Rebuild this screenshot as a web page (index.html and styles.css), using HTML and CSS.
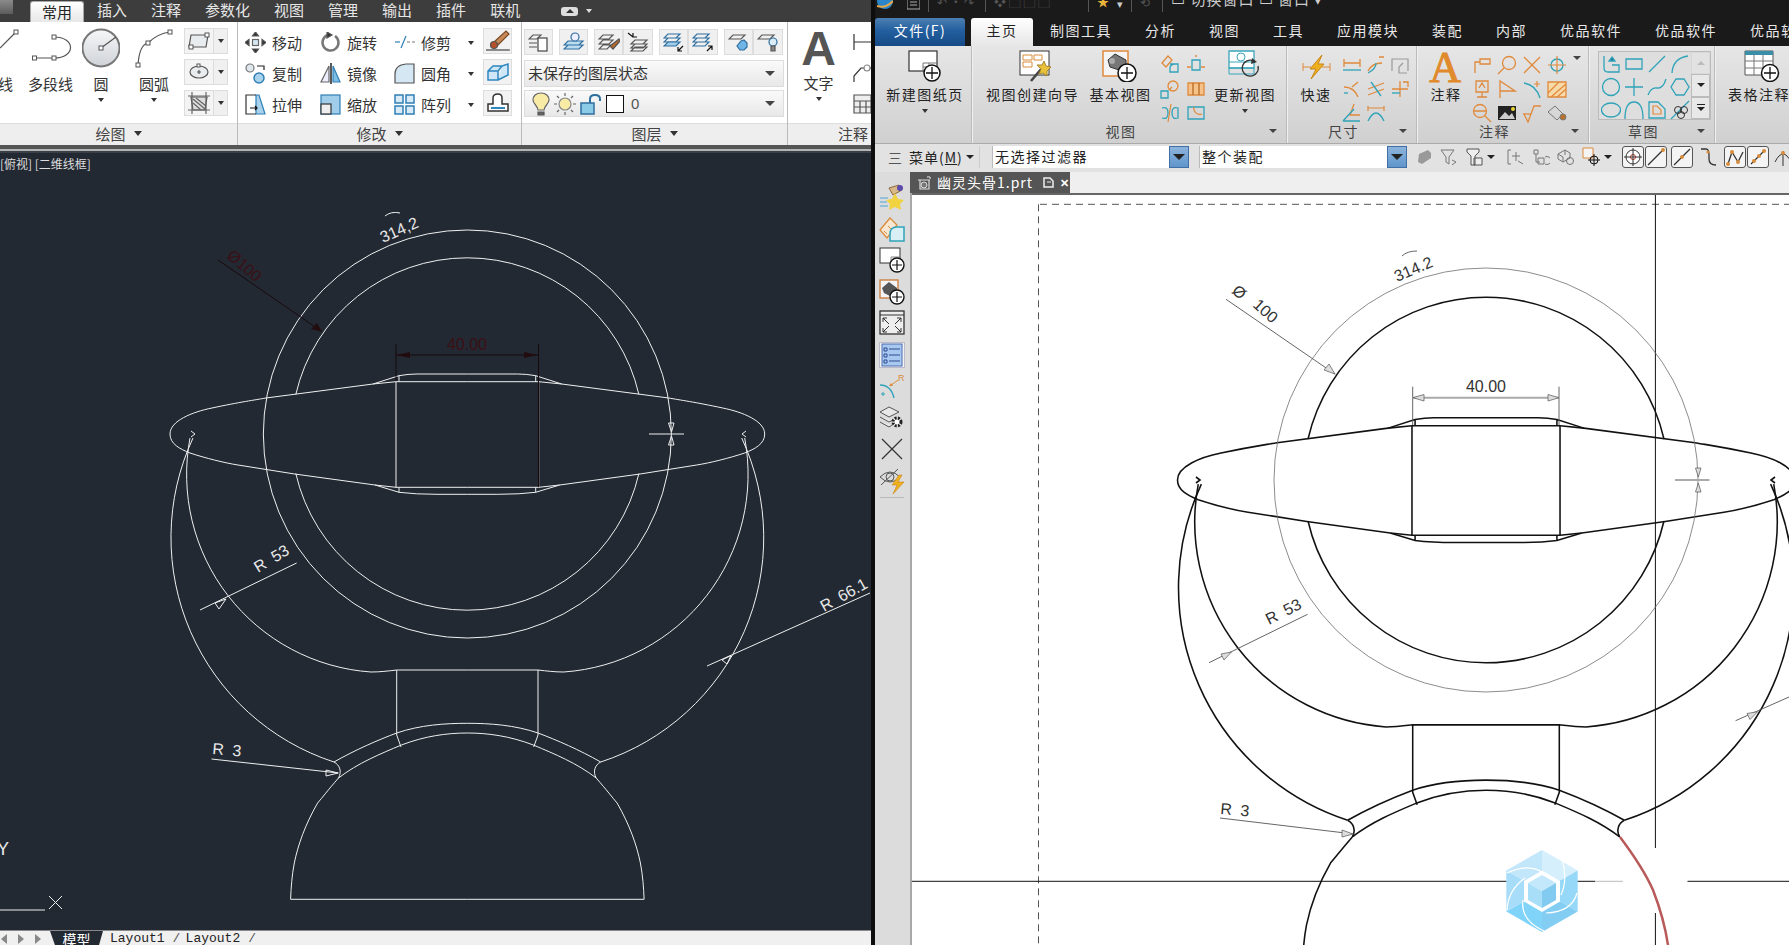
FILE: index.html
```html
<!DOCTYPE html>
<html lang="zh-CN">
<head>
<meta charset="utf-8">
<title>CAD</title>
<link rel="stylesheet" href="styles.css">
</head>
<body>
<div class="screen">

<section class="acad">
  <nav class="acad-tabs">
    <span class="app-btn"></span>
    <span class="atab atab-on">常用</span><span class="atab">插入</span><span class="atab">注释</span><span class="atab">参数化</span><span class="atab">视图</span><span class="atab">管理</span><span class="atab">输出</span><span class="atab">插件</span><span class="atab">联机</span>
    <span class="min-pill"><i class="tri-up"></i></span><i class="tri tri-w"></i>
  </nav>

  <div class="acad-ribbon">
    <div class="apanel ap-draw">
      <div class="apanel-body">
        <div class="atool tool-line">
          <svg width="22" height="42" viewBox="0 28 22 42" class="g"><path d="M0 48 L15 33"/><rect class="n" x="14" y="30" width="4" height="4"/></svg>
          <span>线</span>
        </div>
        <div class="atool tool-pl">
          <svg width="45" height="42" viewBox="28 28 45 42" class="g"><path d="M35 58H54M54 37C76 37 76 58 54 58"/><rect class="n" x="32.5" y="56" width="4" height="4"/><rect class="n" x="52" y="56" width="4" height="4"/><rect class="n" x="52" y="35" width="4" height="4"/></svg>
          <span>多段线</span>
        </div>
        <div class="atool tool-c">
          <svg width="38" height="42" viewBox="82 28 38 42" class="g"><defs><linearGradient id="cg" x1="0" y1="0" x2="0" y2="1"><stop offset="0" stop-color="#f6f7f8"/><stop offset="1" stop-color="#cfd3d8"/></linearGradient></defs><circle cx="101" cy="48" r="18.5" fill="url(#cg)" stroke="#777" stroke-width="2"/><path d="M101 48L116 37"/><rect class="n" x="99" y="46" width="4" height="4"/></svg>
          <span>圆</span><i class="tri tri-s"></i>
        </div>
        <div class="atool tool-arc">
          <svg width="38" height="42" viewBox="135 28 38 42" class="g"><path d="M138 65C139 50 143 44 148 43C155 36 162 33 170 32"/><rect class="n" x="136" y="63" width="4" height="4"/><rect class="n" x="146" y="41" width="4" height="4"/><rect class="n" x="168" y="30" width="4" height="4"/></svg>
          <span>圆弧</span><i class="tri tri-s"></i>
        </div>
        <div class="asplit-col">
          <div class="asplit"><b><svg width="22" height="18" viewBox="0 0 22 18" class="g"><path d="M3 3H20L18 15H1Z" fill="#e9ecef"/><rect class="n" x="1" y="13" width="4" height="4"/><rect class="n" x="17" y="1" width="4" height="4"/></svg></b><em><i class="tri tri-s"></i></em></div>
          <div class="asplit"><b><svg width="22" height="18" viewBox="0 0 22 18" class="g"><ellipse cx="11" cy="9" rx="9" ry="6" fill="#e9ecef"/><path d="M11 7V11M9 9H13"/><rect class="n" x="9" y="1" width="3" height="3"/></svg></b><em><i class="tri tri-s"></i></em></div>
          <div class="asplit"><b><svg width="22" height="22" viewBox="0 0 22 22" class="g"><path d="M3 5H19L17 18H5Z" fill="#ddd"/><path d="M5 7L17 17M8 6L18 14M5 11L13 18M0 4H22M0 18H22M4 0V22M18 0V22" stroke="#666"/></svg></b><em><i class="tri tri-s"></i></em></div>
        </div>
      </div>
      <div class="apanel-title">绘图<i class="tri tri-t"></i></div>
    </div>

    <div class="apanel ap-mod">
      <div class="apanel-body">
        <div class="mod-grid">
          <div class="mod"><svg width="21" height="21" viewBox="0 0 21 21" class="g"><path d="M10.5 0L7.5 4H13.5ZM10.5 21L7.5 17H13.5ZM0 10.5L4 7.5V13.5ZM21 10.5L17 7.5V13.5Z" fill="#333"/><rect x="7.5" y="7.5" width="6" height="6" fill="#d8e9f4" stroke="#666"/></svg><span>移动</span></div>
          <div class="mod"><svg width="21" height="21" viewBox="0 0 21 21" class="g"><path d="M8 3A8 8 0 1 0 15 4" fill="none" stroke="#777" stroke-width="2.5"/><path d="M7 0L12 3L7 6Z" fill="#333"/></svg><span>旋转</span></div>
          <div class="mod"><svg width="21" height="21" viewBox="0 0 21 21" class="g"><path d="M1 10H6" stroke="#2f7fb5"/><path d="M7 16L12 4" stroke="#2f7fb5"/><path d="M13 10H21" stroke="#777" stroke-dasharray="3 2"/></svg><span>修剪</span><i class="tri tri-s mod-tri"></i></div>
          <div class="mod"><svg width="21" height="21" viewBox="0 0 21 21" class="g"><circle cx="5" cy="5" r="4" fill="#dfe7ee" stroke="#777"/><circle cx="14" cy="15" r="5" fill="#a9d3ec" stroke="#2f7fb5" stroke-width="1.5"/><path d="M12 3H19V7" stroke="#222"/></svg><span>复制</span></div>
          <div class="mod"><svg width="21" height="21" viewBox="0 0 21 21" class="g"><path d="M9 3L1 19H9Z" fill="#eef" stroke="#666"/><path d="M13 3L20 19H13Z" fill="#7fbfe6" stroke="#2f7fb5"/><path d="M11 0V21" stroke="#222" stroke-width="1.5"/></svg><span>镜像</span></div>
          <div class="mod"><svg width="21" height="21" viewBox="0 0 21 21" class="g"><path d="M1 20V11Q1 2 12 1H20V20Z" fill="#d5e7f3" stroke="#555"/></svg><span>圆角</span><i class="tri tri-s mod-tri"></i></div>
          <div class="mod"><svg width="21" height="21" viewBox="0 0 21 21" class="g"><path d="M11 1H14L20 20H11Z" fill="#a9d3ec" stroke="#2f7fb5"/><path d="M11 1H1V20H11" stroke="#333"/><path d="M5 14H12M10 12L12 14L10 16" stroke="#111"/></svg><span>拉伸</span></div>
          <div class="mod"><svg width="21" height="21" viewBox="0 0 21 21" class="g"><rect x="1" y="1" width="19" height="19" fill="#9fcdea" stroke="#2f7fb5"/><rect x="1" y="10" width="10" height="10" fill="#eee" stroke="#333"/></svg><span>缩放</span></div>
          <div class="mod"><svg width="21" height="21" viewBox="0 0 21 21" class="g"><path d="M1 1H9V9H1ZM12 1H20V9H12ZM1 12H9V20H1ZM12 12H20V20H12Z" fill="#d9ebf6" stroke="#2f7fb5" stroke-width="1.5"/></svg><span>阵列</span><i class="tri tri-s mod-tri"></i></div>
        </div>
        <div class="abtn-col">
          <div class="abtn"><svg width="24" height="22" viewBox="0 0 24 22" class="g"><path d="M8 12L20 1L23 4L12 15Z" fill="#c98a5a" stroke="#7a4a22"/><circle cx="8" cy="15" r="3.5" fill="#b5502a"/><path d="M0 20H24" stroke="#444"/></svg></div>
          <div class="abtn"><svg width="24" height="22" viewBox="0 0 24 22" class="g"><path d="M2 10L7 5H16L12 10V19H2ZM12 10H2M16 5L22 3V14L12 19" fill="#cfe7f6" stroke="#2f87c0" stroke-width="1.5"/></svg></div>
          <div class="abtn"><svg width="24" height="22" viewBox="0 0 24 22" class="g"><path d="M2 19V12H7V6Q7 2 12 2Q16 2 16 6V12H22V19Z" fill="#fff" stroke="#333" stroke-width="1.5"/><path d="M5 16H19" stroke="#2f87c0" stroke-width="2"/></svg></div>
        </div>
      </div>
      <div class="apanel-title">修改<i class="tri tri-t"></i></div>
    </div>

    <div class="apanel ap-layer">
      <div class="apanel-body layer-body">
        <div class="layer-top">
          <div class="lgroup"><span><svg width="22" height="20" viewBox="0 0 22 20" class="g"><path d="M5 3H13L9 7H1ZM1 11H9M1 15H9" stroke="#555"/><rect x="10" y="6" width="9" height="13" fill="#fff" stroke="#444"/></svg></span></div>
          <div class="lgroup"><span><svg width="22" height="20" viewBox="0 0 22 20" class="g"><path d="M5 9H20L16 13H1ZM5 13H20L16 17H1Z" fill="#bcdcf0" stroke="#2f6f9f"/><circle cx="12" cy="5" r="4" fill="#eef" stroke="#2f6f9f"/></svg></span></div>
          <div class="lgroup"><span><svg width="22" height="20" viewBox="0 0 22 20" class="g"><path d="M5 3H15L11 7H1ZM5 8H15L11 12H1ZM5 13H13L9 17H1Z"/><path d="M12 14L21 7L22 9L15 17Z" fill="#b86a2c"/></svg></span><span><svg width="22" height="20" viewBox="0 0 22 20" class="g"><path d="M8 8H20L16 12H4ZM8 12H20L16 16H4ZM8 15H20L16 19H4Z"/><path d="M6 1V5H10M1 1L6 5" stroke="#111"/></svg></span></div>
          <div class="lgroup"><span><svg width="22" height="20" viewBox="0 0 22 20" class="g"><path d="M5 2H17L13 6H1ZM5 6H17L13 10H1Z" stroke="#2f6f9f"/><path d="M5 10H17L13 14H1Z" fill="#9fcdea" stroke="#2f6f9f"/><path d="M20 14L15 19M15 15V19H19" stroke="#111"/></svg></span><span><svg width="22" height="20" viewBox="0 0 22 20" class="g"><path d="M5 2H17L13 6H1ZM5 6H17L13 10H1ZM5 10H17L13 14H1Z" stroke="#2f6f9f"/><path d="M15 19L20 14M16 14H20V18" stroke="#111"/></svg></span></div>
          <div class="lgroup"><span><svg width="22" height="20" viewBox="0 0 22 20" class="g"><path d="M5 3H17L13 7H1Z"/><path d="M13 9L16 8L19 11L19 15L16 18L12 18L9 14Z" fill="#6fb6e6" stroke="#2f6f9f"/></svg></span><span><svg width="22" height="20" viewBox="0 0 22 20" class="g"><path d="M5 3H17L13 7H1Z"/><circle cx="16" cy="10" r="4" fill="#d9ecf7" stroke="#2f6f9f"/><path d="M14 14H18V19H14Z" fill="#888"/></svg></span></div>
        </div>
        <div class="lcombo"><span class="lcombo-t">未保存的图层状态</span><i class="tri tri-b"></i></div>
        <div class="lcombo lcombo-2">
          <svg width="18" height="24" viewBox="0 0 18 24" class="g"><path d="M9 1C4 1 1 4 1 8C1 12 6 14 6 18H12C12 14 17 12 17 8C17 4 14 1 9 1Z" fill="#f7eba6" stroke="#666"/><path d="M6 20H12V23H6Z" fill="#666"/></svg>
          <svg width="22" height="22" viewBox="0 0 22 22" class="g"><circle cx="11" cy="11" r="6" fill="#f7eba6" stroke="#888"/><path d="M11 0V3M11 19V22M0 11H3M19 11H22M3 3L5 5M17 17L19 19M3 19L5 17M17 5L19 3" stroke="#666"/></svg>
          <svg width="22" height="22" viewBox="0 0 22 22" class="g"><rect x="1" y="10" width="13" height="11" fill="#8ccbe8" stroke="#2f6f9f" stroke-width="1.5"/><path d="M10 10V6Q10 2 15 2Q20 2 20 6V8" fill="none" stroke="#2f6f9f" stroke-width="2"/></svg>
          <span class="lswatch"></span><span class="lname">0</span><i class="tri tri-b"></i>
        </div>
      </div>
      <div class="apanel-title">图层<i class="tri tri-t"></i></div>
    </div>

    <div class="apanel ap-note">
      <div class="apanel-body note-body">
        <div class="atool tool-text"><strong class="bigA">A</strong><span>文字</span><i class="tri tri-s"></i></div>
        <div class="note-side">
          <svg width="18" height="20" viewBox="0 0 18 20" class="g"><path d="M1 2V18M1 10H18" stroke="#333"/></svg>
          <svg width="18" height="22" viewBox="0 0 18 22" class="g"><path d="M1 20V14L8 6H18" stroke="#333"/><circle cx="14" cy="6" r="3" fill="#fff" stroke="#888"/></svg>
          <svg width="18" height="20" viewBox="0 0 18 20" class="g"><path d="M1 1H18V19H1ZM1 7H18M1 13H18M7 7V19M13 7V19" fill="#eee" stroke="#555"/></svg>
        </div>
      </div>
      <div class="apanel-title note-title">注释</div>
    </div>
  </div>

  <div class="acad-sep"></div>

  <div class="acad-view">
    <div class="view-label">[俯视] [二维线框]</div>
    <svg class="cad cad-dark" width="871" height="777" viewBox="0 153 871 777">
      <defs>
        <g id="half">
          <path d="M170 434C170 421 192 412 212 408C240 402 255 400 266 398L373 384L396 381.7"/>
          <path d="M170 434C170 444 180 449 190 453C205 458 225 463 238 465L294.6 474L375 485L396 487.3"/>
          <path d="M373 384L399 375.7Q408 374 417 374H467.35M399 375.7V381.7"/>
          <path d="M375 485L399 492.3Q415 494.3 437 494.3H467.35M399 487.3V492.3"/>
          <path d="M396 381.7H467.35M396 487.3H467.35"/>
          <path d="M193 438A236 236 0 0 0 334 762"/>
          <path d="M190 438A198 198 0 0 0 371 672C380 672 388 671 396.7 670H467.35"/>
          <path d="M396.7 670V735L401 747"/>
          <path d="M334 762C355 750 378 740 396.7 733C420 725 445 723.3 467.35 723.3"/>
          <path d="M338.5 778C358 763 380 754 401.4 745C425 736 447 733 467.35 733"/>
          <path d="M334 762C340 765 342 772 338.5 778"/>
        </g>
        <path id="dome" d="M338.5 778C328 790 322 798 317.6 803C305 825 298 845 294.3 863C292 875 291 888 290.6 899.3H467.35"/>
        <g id="head">
          <use href="#half"/>
          <use href="#half" transform="translate(934.7 0) scale(-1 1)"/>
          <path d="M396 381.7V487.3M538.7 381.7V487.3"/>
          <path d="M295.8 394.5A176 176 0 0 1 638.9 394.5M295.8 473.5A176 176 0 0 0 638.9 473.5"/>
        </g>
      </defs>
      <use href="#head"/>
      <use href="#dome"/>
      <use href="#dome" transform="translate(934.7 0) scale(-1 1)"/>
      <circle cx="467.35" cy="434" r="204"/>
      <path class="ink" d="M538.5 344V487M396 344V381M396 355H537.7M218 260L322 331.7"/>
      <path class="ink-fill" d="M396 355L410 352V358ZM537.7 355L524 352V358ZM322 331.7L311 329L317 323Z"/>
      <text class="dim ink-t" x="467" y="350" text-anchor="middle">40.00</text>
      <text class="dim ink-t" transform="translate(226 257) rotate(41)">Ø100</text>
      <text class="dim" transform="translate(383 243) rotate(-24)">314,2</text>
      <path d="M385 216Q391 211 400 213"/>
      <path d="M191 431L195 434L191 437M746 431L742 434L746 437"/>
      <path d="M200 610L296.6 563M707 666L870 593M211.5 759L338.5 773"/>
      <path d="M215 603L226 599L219 609ZM722 660L731 655.5L727 664ZM326 770L338 773L326 776Z"/>
      <text class="dim" transform="translate(258 573) rotate(-31)">R 53</text>
      <text class="dim" transform="translate(824 612) rotate(-29)">R 66.1</text>
      <text class="dim" transform="translate(212 754) rotate(5)">R 3</text>
      <path d="M649 434H684M668.5 423H674L671.5 432ZM668.5 445H674L671.5 436Z"/>
      <text class="dim ucs" x="-3" y="855">Y</text>
      <path d="M0 910H45M49 896L62 909M62 896L49 909"/>
    </svg>
  </div>

  <div class="acad-bottom">
    <span class="nav"><i class="nav-l"></i><i class="nav-r"></i><i class="nav-e"></i></span>
    <span class="model">模型</span>
    <span class="layout">Layout1</span><span class="slash">/</span><span class="layout">Layout2</span><span class="slash">/</span>
  </div>
</section>

<div class="gutter"></div>

<section class="nx">
  <div class="nx-quick">
    <svg width="16" height="10" viewBox="0 0 16 10"><ellipse cx="8" cy="1" rx="8" ry="8" fill="#2a86c8"/><path d="M0 6Q8 9 16 1" fill="none" stroke="#e8a84a" stroke-width="2"/></svg>
    <svg class="qdoc" width="13" height="10" viewBox="0 0 13 10"><path d="M0 -2H13V9H0ZM3 2H10M3 5H10" fill="none" stroke="#aaa"/></svg>
    <span class="qsep"></span><span class="qfaint q1">↶ · ↷</span><span class="qsep"></span><span class="qfaint q2">❖ ▢ ▢ ▢</span><span class="qsep"></span>
    <span class="qstar">★</span><span class="qarrow">▾</span><span class="qsep"></span><span class="qfaint q3">⟲</span><span class="qsep"></span>
    <span class="qtext">▭ 切换窗口 ▭ 窗口 ▾</span>
  </div>
  <nav class="nx-tabs">
    <span class="nfile">文件(F)</span><span class="ntab-on">主页</span>
    <span class="ntab nt-first">制图工具</span><span class="ntab">分析</span><span class="ntab">视图</span><span class="ntab">工具</span><span class="ntab">应用模块</span><span class="ntab">装配</span><span class="ntab">内部</span><span class="ntab">优品软件</span><span class="ntab">优品软件</span><span class="ntab">优品软件</span>
  </nav>

  <div class="nx-ribbon">
    <div class="npanel np-1">
      <div class="npanel-body">
        <div class="ntool nt-sheet">
          <svg width="36" height="32" viewBox="0 0 36 32"><use href="#sheet"/></svg>
          <span>新建图纸页</span><i class="tri tri-s"></i>
        </div>
      </div>
    </div>
    <div class="npanel np-2">
      <div class="npanel-body">
        <div class="ntool nt-wiz">
          <svg width="36" height="32" viewBox="0 0 36 32"><rect x="5" y="1" width="29" height="24" fill="#fff" stroke="#333"/><path d="M8 5H17V10H8ZM19 5H27V10H19ZM8 12H17V17H8Z" fill="#fff" stroke="#d98c3c"/><path d="M16 31L27 18" stroke="#444" stroke-width="2.5"/><path d="M29 11L31 16L36 17L32 21L32 26L28 23L24 24L26 19L22 15L27 15Z" fill="#e8c33a" stroke="#a8842a"/></svg>
          <span>视图创建向导</span>
        </div>
        <div class="ntool nt-base">
          <svg width="38" height="32" viewBox="0 0 38 32"><rect x="1" y="1" width="25" height="25" fill="#f4f4f4" stroke="#e08a3c" stroke-width="1.5"/><path d="M6 10L13 4L24 10V14L30 18V25L22 24L17 20L8 17Z" fill="#777" stroke="#333"/><circle cx="10" cy="11" r="3" fill="#aaa"/><circle cx="25" cy="23" r="9" fill="#fff" stroke="#111" stroke-width="1.5"/><path d="M25 17V29M19 23H31" stroke="#111" stroke-width="1.3"/></svg>
          <span>基本视图</span>
        </div>
        <div class="ngrid ngrid-view">
          <svg viewBox="0 0 20 20" class="o"><path d="M2 8L8 1L12 5L6 12Z"/><path class="t" d="M10 9H18V17H10V13Q10 10 14 9"/></svg>
          <svg viewBox="0 0 20 20" class="o"><path d="M1 12H5M15 12H19"/><path class="t" d="M6 5H14V15H6Z"/><path d="M9 1H11"/></svg>
          <svg viewBox="0 0 20 20" class="o"><path class="t" d="M1 12H8V19H1Z"/><circle cx="13" cy="7" r="5"/><path d="M9 11L12 8"/></svg>
          <svg viewBox="0 0 20 20" class="o"><path d="M2 4H18V16H2Z" fill="#f5c38a"/><path d="M7 4V16M13 4V16" stroke="#b56a22"/></svg>
          <svg viewBox="0 0 20 20" class="t"><path d="M2 5Q8 3 8 10Q8 17 2 15M18 5Q12 3 12 10Q12 17 18 15Z"/><path class="oo" d="M11 1L8 19"/></svg>
          <svg viewBox="0 0 20 20" class="t"><path d="M2 4H18V16H2Z"/><path class="oo" d="M8 4A6 6 0 0 0 16 11"/></svg>
        </div>
        <div class="ntool nt-upd">
          <svg width="34" height="32" viewBox="0 0 34 32"><path d="M1 1H26V18H1Z" fill="#fff" stroke="#3aa6bb" stroke-width="1.3"/><circle cx="13" cy="7" r="4" fill="#fff" stroke="#3aa6bb"/><path d="M1 12H26M1 24H26V18H1Z" fill="none" stroke="#3aa6bb"/><path d="M30 16A8 8 0 1 1 26 11" fill="none" stroke="#333" stroke-width="1.3"/><path d="M24 8L29 12L23 14Z" fill="#333"/></svg>
          <span>更新视图</span><i class="tri tri-s"></i>
        </div>
      </div>
      <div class="npanel-title"><span>视图</span><i class="tri tri-c"></i></div>
    </div>
    <div class="npanel np-3">
      <div class="npanel-body">
        <div class="ntool nt-quick">
          <svg width="29" height="32" viewBox="0 0 29 32"><path d="M1 17H9M20 17H28M1 13V21M28 13V21" fill="none" stroke="#e08a3c"/><path d="M20 5L8 19H14L9 29L22 14H16Z" fill="#efb020" stroke="#c98515"/></svg>
          <span>快速</span>
        </div>
        <div class="ngrid ngrid-dim">
          <svg viewBox="0 0 20 20" class="o"><path d="M2 4V12M18 4V12M2 8H18"/><path class="t" d="M1 15H19"/></svg>
          <svg viewBox="0 0 20 20" class="o"><path d="M2 16Q6 8 16 8M13 2L18 2"/><path class="t" d="M2 18Q10 14 10 8"/></svg>
          <svg viewBox="0 0 20 20" class="g2"><path d="M2 16V4H18V16M13 8L9 12V18H17"/></svg>
          <svg viewBox="0 0 20 20" class="o"><path d="M2 8Q12 8 16 18M16 3L10 8"/><path class="t" d="M2 14H6"/></svg>
          <svg viewBox="0 0 20 20" class="o"><path d="M2 10L18 4M2 16L18 10"/><path class="t" d="M5 3L15 17"/></svg>
          <svg viewBox="0 0 20 20" class="o"><path d="M2 10H18M10 2V18M13 3H18V8"/><path class="t" d="M2 14H10"/></svg>
          <svg viewBox="0 0 20 20" class="o"><path d="M12 1L8 12H18"/><path class="t" d="M1 18L12 6M1 18H18"/></svg>
          <svg viewBox="0 0 20 20" class="t"><path d="M2 18Q10 2 18 18"/><path class="oo" d="M2 5H18M2 3V8M18 3V8"/></svg>
        </div>
      </div>
      <div class="npanel-title"><span>尺寸</span><i class="tri tri-c"></i></div>
    </div>
    <div class="npanel np-4">
      <div class="npanel-body">
        <div class="ntool nt-A">
          <strong class="nbigA">A</strong>
          <span>注释</span>
        </div>
        <div class="ngrid ngrid-note">
          <svg viewBox="0 0 20 20" class="o"><path d="M8 4H18V9H8ZM8 7H3V18"/></svg>
          <svg viewBox="0 0 20 20" class="o"><circle cx="12" cy="8" r="6.5"/><path d="M7 13L1 19"/></svg>
          <svg viewBox="0 0 20 20" class="o"><path d="M2 2L18 18M18 2L2 18"/></svg>
          <svg viewBox="0 0 20 20" class="t"><circle cx="10" cy="10" r="6"/><path class="oo" d="M10 1V19M1 10H19"/></svg>
          <svg viewBox="0 0 20 20" class="o"><path d="M4 2H16V13H4ZM10 13V18M5 18H15M7 9L10 4L13 9"/></svg>
          <svg viewBox="0 0 20 20" class="o"><path d="M3 19V2L18 12H3"/></svg>
          <svg viewBox="0 0 20 20" class="t"><path d="M2 4Q14 6 18 19"/><path class="oo" d="M12 5H18M15 2V8"/></svg>
          <svg viewBox="0 0 20 20" class="o"><path d="M1 3H19V18H1Z" fill="#f8d9a8"/><path d="M4 18L19 5M1 14L12 3M10 18L19 10"/></svg>
          <svg viewBox="0 0 20 20" class="o"><circle cx="8" cy="8" r="6.5"/><path d="M1.5 8H14.5M13 13L19 19"/></svg>
          <svg viewBox="0 0 20 20"><rect x="1" y="3" width="18" height="14" fill="#222"/><path d="M2 16L8 9L12 13L15 10L18 16Z" fill="#ccc"/><circle cx="16" cy="6" r="2" fill="#e8d23a"/></svg>
          <svg viewBox="0 0 20 20" class="o"><path d="M2 11L6 19L12 3H19"/><path d="M1 11H9"/></svg>
          <svg viewBox="0 0 20 20" class="g3"><path d="M1 9L8 3L16 11L10 17Z"/><circle cx="16" cy="14" r="3" fill="#b9722c"/></svg>
        </div>
        <i class="tri tri-c note-tri"></i>
      </div>
      <div class="npanel-title"><span>注释</span><i class="tri tri-c"></i></div>
    </div>
    <div class="npanel np-5">
      <div class="npanel-body">
        <div class="sketch">
          <div class="ngrid ngrid-sketch">
            <svg viewBox="0 0 20 20" class="t"><path d="M3 2V14Q3 18 7 18H18V11H11"/><path d="M11 3L14 7H8Z" fill="#1d6f85"/></svg>
            <svg viewBox="0 0 20 20" class="t"><path d="M2 5H18V15H2Z"/></svg>
            <svg viewBox="0 0 20 20" class="t"><path d="M2 18L18 2"/></svg>
            <svg viewBox="0 0 20 20" class="t"><path d="M2 19Q3 4 18 2"/></svg>
            <svg viewBox="0 0 20 20" class="t"><circle cx="10" cy="10" r="8.5"/></svg>
            <svg viewBox="0 0 20 20" class="t"><path d="M10 1V19M1 10H19"/></svg>
            <svg viewBox="0 0 20 20" class="t"><path d="M1 18Q4 10 10 11Q16 12 19 2"/></svg>
            <svg viewBox="0 0 20 20" class="t"><path d="M6 2H14L19 10L14 18H6L1 10Z"/></svg>
            <svg viewBox="0 0 20 20" class="t"><ellipse cx="10" cy="10" rx="9.5" ry="7"/></svg>
            <svg viewBox="0 0 20 20" class="t"><path d="M1 19Q1 2 10 2Q19 2 19 19"/></svg>
            <svg viewBox="0 0 20 20" class="oo-t"><path class="t" d="M2 2H11L18 9V18H2Z"/><path class="oo" d="M6 6H10L14 10V14H6Z"/></svg>
            <svg viewBox="0 0 20 20" class="t"><path d="M1 19L19 1"/><circle cx="8" cy="10" r="3.5" class="kk"/><circle cx="14" cy="10" r="3.5" class="kk"/><circle cx="11" cy="15" r="3.5" class="kk"/></svg>
          </div>
          <div class="sketch-scroll">
            <span class="ss ss-up"><i class="tri-up-g"></i></span>
            <span class="ss"><i class="tri tri-k"></i></span>
            <span class="ss"><b class="ss-bar"></b><i class="tri tri-k"></i></span>
          </div>
        </div>
      </div>
      <div class="npanel-title"><span>草图</span><i class="tri tri-c"></i></div>
    </div>
    <div class="npanel np-6">
      <div class="npanel-body">
        <div class="ntool nt-table">
          <svg width="36" height="32" viewBox="0 0 36 32"><path d="M1 1H29V25H1Z" fill="#fff" stroke="#555"/><path d="M1 1H29V5H1Z" fill="#3a8fa6"/><path d="M1 11H29M1 18H29M10 5V25M19 5V25" stroke="#777"/><circle cx="26" cy="23" r="8.5" fill="#fff" stroke="#111" stroke-width="1.5"/><path d="M26 17V29M20 23H32" stroke="#111" stroke-width="1.3"/></svg>
          <span>表格注释</span>
        </div>
      </div>
    </div>
  </div>

  <div class="nx-bar">
    <div class="tb-menu"><span class="tb-ham">三</span><span class="tb-m">菜单(<u>M</u>)</span><i class="tri tri-k"></i></div>
    <div class="tb-input">无选择过滤器</div><span class="tb-drop"><i class="tri tri-d"></i></span>
    <div class="tb-input tb-input-2">整个装配</div><span class="tb-drop"><i class="tri tri-d"></i></span>
    <span class="tb-icons">
      <span class="tb-i"><svg width="16" height="18" viewBox="0 0 16 18"><path d="M3 6L12 2L15 5V10L6 16L2 14Z" fill="#999"/></svg></span>
      <span class="tb-i"><svg width="18" height="18" viewBox="0 0 18 18" class="g3"><path d="M1 2H14L9 9V16L6 14V9ZM12 12L16 14L12 17"/></svg></span>
      <span class="tb-i"><svg width="18" height="18" viewBox="0 0 18 18" class="g4"><path d="M2 1H14V4L10 8V17H6V8L2 4ZM9 10H17V17H9Z"/></svg></span><i class="tri tri-k tb-a"></i>
      <span class="tb-i"><svg width="18" height="18" viewBox="0 0 18 18" class="g3"><path d="M4 2H1V16H4M9 4V13M5 8H13M11 13L16 16"/></svg></span>
      <span class="tb-i"><svg width="18" height="18" viewBox="0 0 18 18" class="g3"><path d="M2 2H6V6H2ZM4 6V14H8M6 10H12V16H6ZM13 9A4 4 0 1 1 13 16"/></svg></span>
      <span class="tb-i"><svg width="18" height="18" viewBox="0 0 18 18" class="g3"><path d="M1 6L8 2L13 5V10L6 14L1 11ZM8 2V7M1 6L6 9V14"/><circle cx="13" cy="13" r="3.5"/></svg></span>
      <span class="tb-i"><svg width="18" height="20" viewBox="0 0 18 20"><path d="M1 1H11V11H1Z" fill="#f4f4f4" stroke="#e08a3c"/><circle cx="12" cy="13" r="4" fill="none" stroke="#111"/><path d="M12 7V19M6 13H18" stroke="#111"/></svg></span><i class="tri tri-k tb-a tb-a2"></i>
      <span class="tb-box"><svg width="18" height="18" viewBox="0 0 18 18"><circle cx="9" cy="9" r="7" fill="#fff" stroke="#333"/><circle cx="9" cy="9" r="2.5" fill="none" stroke="#c0392b"/><path d="M9 0V18M0 9H18" stroke="#333"/></svg></span>
      <span class="tb-box"><svg width="18" height="18" viewBox="0 0 18 18"><path d="M1 17L17 1" stroke="#333" stroke-width="1.3"/><circle cx="16" cy="2" r="2" fill="#d98c3c"/></svg></span>
      <span class="tb-box tb-box-3"><svg width="18" height="18" viewBox="0 0 18 18"><path d="M1 17L17 1" stroke="#333" stroke-width="1.3"/><circle cx="9" cy="9" r="2" fill="#d98c3c"/></svg></span>
      <span class="tb-i tb-curve"><svg width="18" height="20" viewBox="0 0 18 20"><path d="M1 2H6Q9 2 9 8V12Q9 18 16 18" fill="none" stroke="#333" stroke-width="1.3"/><circle cx="8" cy="5" r="1.6" fill="#d98c3c"/></svg></span>
      <span class="tb-box"><svg width="18" height="18" viewBox="0 0 18 18"><path d="M2 16L6 4L12 14L17 4" fill="none" stroke="#333" stroke-width="1.3"/><circle cx="6" cy="4" r="2" fill="#d98c3c"/><circle cx="12" cy="14" r="2" fill="#d98c3c"/><circle cx="2" cy="16" r="2" fill="#d98c3c"/></svg></span>
      <span class="tb-box"><svg width="18" height="18" viewBox="0 0 18 18"><path d="M2 16L16 2" fill="none" stroke="#333" stroke-width="1.3"/><circle cx="5" cy="13" r="2" fill="#d98c3c"/><circle cx="10" cy="8" r="2" fill="#d98c3c"/><circle cx="15" cy="3" r="2" fill="#d98c3c"/></svg></span>
      <span class="tb-i"><svg width="18" height="18" viewBox="0 0 18 18"><path d="M1 14Q9 -2 17 14M9 3V18" fill="none" stroke="#333"/><circle cx="9" cy="5" r="2" fill="#d98c3c"/></svg></span>
    </span>
  </div>

  <div class="nx-main">
    <aside class="nx-side">
      <svg viewBox="0 0 26 26"><path d="M10 4L20 1L23 6L14 11Z" fill="#d9b98a" stroke="#8a6a3a"/><circle cx="21" cy="4" r="3" fill="#5a4ab0"/><path d="M16 9L19 15L25 16L21 20L22 26L16 23L10 26L11 20L7 16L13 15Z" fill="#f1d23f"/><path d="M1 14H9M1 18H8M1 22H9" stroke="#7db7dc" stroke-width="1.5"/></svg>
      <svg viewBox="0 0 26 26"><path d="M1 14L11 2L18 9L8 22Z" fill="#f7e7d2" stroke="#d98c3c" stroke-width="1.3"/><path d="M5 15L8 18M9 10L12 13" stroke="#d98c3c"/><path d="M11 25V18Q11 11 18 11H25V25Z" fill="#d8f0f5" stroke="#2fa3b8" stroke-width="1.5"/></svg>
      <svg viewBox="0 0 26 26"><rect x="1" y="1" width="20" height="15" fill="#fff" stroke="#333"/><path d="M12 10H21V16H12Z" fill="none" stroke="#888"/><circle cx="18" cy="18" r="7" fill="#fff" stroke="#111" stroke-width="1.4"/><path d="M18 13V23M13 18H23" stroke="#111" stroke-width="1.2"/></svg>
      <svg viewBox="0 0 26 26"><rect x="1" y="1" width="18" height="18" fill="#f4f4f4" stroke="#c97a35" stroke-width="1.3"/><path d="M3 9L10 3L18 9V14L13 18L5 14Z" fill="#555"/><circle cx="18" cy="18" r="7" fill="#fff" stroke="#111" stroke-width="1.4"/><path d="M18 13V23M13 18H23" stroke="#111" stroke-width="1.2"/></svg>
      <svg viewBox="0 0 26 26" class="g5"><rect x="1" y="1" width="24" height="23" fill="#eee" stroke="#333" stroke-width="1.3"/><path d="M1 5H25M4 8L10 14M4 8V12M4 8H8M22 8L16 14M22 8V12M22 8H18M4 22L10 16M4 22V18M4 22H8M22 22L16 16M22 22V18M22 22H18"/></svg>
      <svg viewBox="0 0 26 26"><rect x="0.5" y="0.5" width="25" height="25" fill="#f2f2f2" stroke="#bbc"/><rect x="3" y="2" width="20" height="22" fill="#a9c8f0" stroke="#4a6fb0"/><path d="M5 6H8V9H5ZM5 12H8V15H5ZM5 18H8V21H5Z" fill="none" stroke="#2a4a90"/><path d="M10 7H21M10 13H21M10 19H21" stroke="#2a4a90"/></svg>
      <svg viewBox="0 0 26 26"><path d="M1 12Q12 12 15 25" fill="none" stroke="#2fa3b8" stroke-width="1.3"/><path d="M11 13L19 7" stroke="#d98c3c"/><path d="M10 13L14 13L12 10Z" fill="#d98c3c"/><text class="side-r" x="19" y="8">R</text><path d="M2 21H6M4 19V23" stroke="#2fa3b8"/></svg>
      <svg viewBox="0 0 26 26"><path d="M1 7L10 2L20 7L10 12ZM1 12L10 17L14 15M1 17L10 22L13 20" fill="#e8e8e8" stroke="#555"/><circle cx="18" cy="17" r="4" fill="#fff" stroke="#222" stroke-width="3" stroke-dasharray="2 1.2"/></svg>
      <svg viewBox="0 0 26 26"><path d="M3 3L23 23M23 3L3 23" stroke="#333" stroke-width="1.2"/></svg>
      <svg viewBox="0 0 26 26"><path d="M1 9Q11 -1 21 9Q11 19 1 9Z" fill="none" stroke="#555"/><circle cx="11" cy="9" r="4" fill="none" stroke="#555"/><path d="M2 17L19 1" stroke="#555"/><path d="M20 7L13 17H18L14 26L25 14H19L23 7Z" fill="#efb020" stroke="#c98515" stroke-width=".6"/></svg>
      <span class="side-sep"></span>
    </aside>
    <div class="nx-doc">
      <div class="doc-tabs"><span class="doc-tab"><svg width="14" height="14" viewBox="0 0 14 14"><path d="M0 4H12M2 4V13H11V4" fill="none" stroke="#ddd" stroke-width="1.2"/><circle cx="6" cy="9" r="3" fill="#777" stroke="#ddd"/><path d="M9 1H12V3" stroke="#fff"/></svg><span class="doc-name">幽灵头骨1.prt</span><svg width="11" height="11" viewBox="0 0 11 11"><path d="M1 1H7L10 4V10H1Z" fill="none" stroke="#eee" stroke-width="1.5"/><path d="M4 5H8" stroke="#eee"/></svg><b class="doc-x">✕</b></span></div>
      <svg class="cad cad-light" width="877" height="750" viewBox="912 195 877 750">
        <path class="dash" d="M1040 204.3H1789M1038.5 204.3V945"/>
        <path class="guide" d="M1655.4 195V848M1655.4 913V945M912 881.3H1595M1687.5 881.3H1789"/>
        <path class="guide guide-f" d="M1595 881.3H1623"/>
        <g transform="translate(1486 480) scale(1.0375) translate(-467.35 -434)" class="solid">
          <use href="#head"/>
          <use href="#dome"/>
        </g>
        <circle class="thin" cx="1486" cy="480" r="212"/>
        <path class="red" d="M1620 837C1632 853 1645 872 1653 890C1660 908 1665 925 1668 945"/>
        <path class="dimline" d="M1412.7 386.7V425M1559 386.7V425M1226 299.3L1335.3 374.3M1209 662.7L1307.6 614.3M1220 818L1353.7 834M1735.6 720.7L1789 697"/>
        <path class="dimgray" d="M1412.7 397.7H1559M1675 480H1709.5"/>
        <path class="arrow" d="M1413 397.7L1424 394.5V401ZM1559 397.7L1548 394.5V401ZM1335 374L1324 370L1329 364ZM1231.4 652L1221 654L1224 660ZM1353 834L1342 830V837ZM1757.7 711.7L1747 713.5L1750 719.5ZM1695.5 468H1701L1698.3 477ZM1695.5 492H1701L1698.3 483Z"/>
        <path class="chev" d="M1196 477L1200 480L1196 483M1775 477L1771 480L1775 483"/>
        <path class="dimline" d="M1402 256Q1407 251 1417 251"/>
        <text class="ndim" x="1486" y="392" text-anchor="middle">40.00</text>
        <text class="ndim" transform="translate(1397 282) rotate(-23)">314.2</text>
        <text class="ndim" transform="translate(1231 292) rotate(42)">Ø</text>
        <text class="ndim" transform="translate(1252 306) rotate(42)">100</text>
        <text class="ndim" transform="translate(1269 625) rotate(-27)">R 53</text>
        <text class="ndim" transform="translate(1220 814) rotate(5)">R 3</text>
        <g class="wm">
          <path class="w1" d="M1542 850L1577.7 870.5L1542 891Z"/>
          <path class="w2" d="M1577.7 870.5V911.5L1542 891Z"/>
          <path class="w3" d="M1577.7 911.5L1542 932L1542 891Z"/>
          <path class="w4" d="M1542 932L1506.3 911.5L1542 891Z"/>
          <path class="w5" d="M1506.3 911.5V870.5L1542 891Z"/>
          <path class="w6" d="M1506.3 870.5L1542 850V891Z"/>
          <path class="wl" d="M1507 873Q1535 860 1551 880M1562 859Q1568 880 1561 895M1577 893Q1572 912 1546 913M1544 931Q1520 920 1523 900M1507 910Q1508 890 1525 878"/>
          <path class="w0" d="M1542 870.5L1560 881V901.5L1542 912L1524 901.5V881Z"/>
          <path class="wt" d="M1542 875L1556 883L1542 891L1528 883Z"/>
          <path class="wa" d="M1528 883L1542 891V908L1528 900Z"/>
          <path class="wb" d="M1556 883L1542 891V908L1556 900Z"/>
        </g>
      </svg>
    </div>
  </div>
</section>

</div>

<svg class="defs" width="0" height="0">
  <defs>
    <g id="sheet"><rect x="1" y="1" width="28" height="20" fill="#fff" stroke="#333" stroke-width="1.2"/><path d="M15 13H29V21H15ZM15 17H29M21 13V21" fill="none" stroke="#777"/><circle cx="24" cy="23" r="8" fill="#fff" stroke="#111" stroke-width="1.5"/><path d="M24 17V29M18 23H30" stroke="#111" stroke-width="1.3"/></g>
  </defs>
</svg>
</body>
</html>
```

FILE: styles.css
```css
* { box-sizing: border-box; }
html, body { margin: 0; padding: 0; background: #111; }
body { font-family: "Noto Sans CJK SC", "Liberation Sans", sans-serif; }
.screen { display: flex; width: 1789px; height: 945px; overflow: hidden; }
.defs { position: absolute; }
i { display: inline-block; font-style: normal; }
svg { display: block; flex: none; }
.g { fill: none; stroke: #555; stroke-width: 1.2; }
.g .n, .n { fill: #fff; stroke: #555; stroke-width: 1; }

.tri { width: 0; height: 0; border-left: 4px solid transparent; border-right: 4px solid transparent; border-top: 5px solid #333; }
.tri-s { border-left-width: 3px; border-right-width: 3px; border-top-width: 4px; }
.tri-w { border-top-color: #ddd; border-left-width: 3px; border-right-width: 3px; border-top-width: 4px; margin-left: 8px; }
.tri-t { margin-left: 8px; }
.tri-b { border-left-width: 5px; border-right-width: 5px; border-top-width: 5px; border-top-color: #444; margin-left: auto; }
.tri-c { border-top-color: #444; border-left-width: 4px; border-right-width: 4px; border-top-width: 4px; }
.tri-k { border-top-color: #222; border-left-width: 4px; border-right-width: 4px; border-top-width: 4px; }
.tri-d { border-top-color: #222; border-left-width: 6px; border-right-width: 6px; border-top-width: 6px; }
.tri-up { width: 0; height: 0; border-left: 4px solid transparent; border-right: 4px solid transparent; border-bottom: 4px solid #333; }
.tri-up-g { width: 0; height: 0; border-left: 4px solid transparent; border-right: 4px solid transparent; border-bottom: 4px solid #bbb; }

/* left window */
.acad { width: 871px; flex: none; display: flex; flex-direction: column; background: #232933; }
.acad-tabs { height: 22px; background: #3d3d3d; display: flex; align-items: center; color: #e6e6e6; font-size: 15px; flex: none; }
.app-btn { width: 13px; height: 14px; margin-right: 17px; margin-top: -8px; background: linear-gradient(#8b8b8b, #5c5c5c); }
.atab { margin-right: 24px; line-height: 20px; height: 22px; }
.atab-on { height: 21px; margin-top: 1px; padding: 0 11px; margin-right: 13px; color: #222; line-height: 19px; border-radius: 3px 3px 0 0; background: linear-gradient(#fff, #e7e7e7); border: 1px solid #aaa; border-bottom: 0; }
.min-pill { width: 17px; height: 9px; margin-left: 17px; background: #ddd; border-radius: 3px; display: flex; align-items: center; justify-content: center; }

.acad-ribbon { height: 123px; display: flex; background: #fff; flex: none; }
.apanel { display: flex; flex-direction: column; border-right: 1px solid #bbb; }
.apanel-body { height: 101px; display: flex; color: #333; font-size: 15px; }
.apanel-title { height: 22px; padding-bottom: 2px; background: #eee; border-top: 1px solid #ddd; display: flex; align-items: center; justify-content: center; color: #444; font-size: 15px; }
.ap-draw { width: 238px; }
.ap-mod { width: 284px; }
.ap-layer { width: 266px; }
.ap-note { width: 83px; border-right: 0; overflow: hidden; }

.atool { display: flex; flex-direction: column; align-items: center; padding-top: 6px; }
.atool span { line-height: 18px; margin-top: 5px; }
.atool .tri { margin-top: 5px; }
.tool-line { width: 22px; align-items: flex-end; }
.tool-line span { margin-right: 9px; }
.tool-pl { width: 45px; margin-left: 6px; }
.tool-c { width: 38px; margin-left: 9px; }
.tool-arc { width: 38px; margin-left: 15px; }
.asplit-col { margin-left: 11px; padding-top: 6px; display: flex; flex-direction: column; gap: 5px; }
.asplit { width: 44px; height: 26px; display: flex; border: 1px solid #ddd; background: #f0f0f0; }
.asplit b { width: 29px; display: flex; align-items: center; justify-content: center; background: #f4f4f4; }
.asplit em { width: 14px; display: flex; align-items: center; justify-content: center; border-left: 1px solid #ddd; }

.ap-mod .apanel-body { padding: 5px 0 0 7px; }
.mod-grid { display: grid; grid-template-columns: 75px 74px 89px; grid-auto-rows: 31px; width: 238px; }
.mod { display: flex; align-items: center; gap: 6px; }
.mod-tri { margin-left: 11px; }
.abtn-col { display: flex; flex-direction: column; gap: 5px; padding-top: 1px; }
.abtn { width: 29px; height: 26px; background: #f2f2f2; border: 1px solid #ddd; display: flex; align-items: center; justify-content: center; }

.layer-body { flex-direction: column; padding: 7px 0 0 2px; }
.layer-top { display: flex; height: 26px; gap: 6px; }
.lgroup { display: flex; }
.lgroup span { width: 29px; height: 26px; background: #f0f0f0; border: 1px solid #ddd; display: flex; align-items: center; justify-content: center; }
.lgroup span + span { width: 30px; }
.lcombo { width: 260px; height: 27px; margin-top: 5px; padding: 0 8px 0 3px; display: flex; align-items: center; font-size: 15px; border: 1px solid #ddd; background: linear-gradient(#fafafa, #e8e8e8); }
.lcombo-t { line-height: 20px; margin-top: -2px; }
.lcombo-2 { margin-top: 3px; padding-left: 7px; gap: 4px; }
.lswatch { width: 18px; height: 18px; background: #fff; border: 1px solid #111; }
.lname { margin-left: 3px; color: #555; font-family: "Liberation Sans", sans-serif; }

.note-body { padding: 0; }
.tool-text { width: 52px; padding: 7px 0 0 10px; }
.tool-text span { margin-top: 5px; }
.tool-text .tri { margin-top: 5px; }
.bigA { display: block; font: 700 48px/40px "Liberation Sans", sans-serif; color: #555; height: 40px; }
.note-side { padding: 10px 0 0 14px; display: flex; flex-direction: column; gap: 10px; }
.note-title { justify-content: flex-start; padding-left: 50px; }

.acad-sep { height: 8px; background: linear-gradient(#555 0 4px, #b4b4b4 4px 6px, #3a3f45 6px); flex: none; }
.acad-view { position: relative; height: 777px; flex: none; overflow: hidden; }
.view-label { position: absolute; left: 0; top: 3px; color: #dcdcdc; font-size: 12px; line-height: 16px; }
.cad { fill: none; }
.cad-dark { stroke: #eef0f0; stroke-width: 1; }
.ink { stroke: #17090c; fill: none; }
.ink-fill { fill: #230c10; stroke: none; }
.dim { font-family: "Liberation Sans", sans-serif; font-size: 16px; fill: #e8e8e8; stroke: none; word-spacing: 4px; }
.ink-t { fill: #3a1015; }
.ucs { font-size: 18px; }

.acad-bottom { height: 15px; background: #f0f0f0; border-top: 1px solid #888; display: flex; align-items: flex-start; overflow: hidden; font: 13px/15px "Liberation Mono", monospace; color: #222; flex: none; }
.nav { width: 50px; height: 15px; display: flex; gap: 6px; padding: 3px 0 0 1px; }
.nav i { width: 0; height: 0; border-top: 5px solid transparent; border-bottom: 5px solid transparent; }
.nav-l { border-right: 6px solid #888; }
.nav-r { border-left: 6px solid #888; margin-left: 5px; }
.nav-e { border-left: 6px solid #888; margin-left: 5px; }
.model { width: 53px; height: 15px; background: #232933; clip-path: polygon(0 0, 100% 0, 92% 100%, 10% 100%); color: #fff; font: 14px/16px "Noto Sans CJK SC", sans-serif; text-align: center; margin-right: 7px; }
.slash { width: 21px; padding-left: 8px; color: #555; }

.gutter { width: 4px; background: #0d0d0d; flex: none; }

/* right window */
.nx { flex: 1; min-width: 0; display: flex; flex-direction: column; background: #1a1a1a; }
.nx-quick { height: 18px; flex: none; display: flex; align-items: flex-start; padding-left: 2px; overflow: hidden; color: #999; }
.qdoc { margin-left: 14px; }
.qsep { width: 1px; height: 12px; background: #555; margin: 0 8px; }
.qfaint { font-size: 12px; line-height: 12px; color: #555; margin-top: -4px; white-space: nowrap; }
.q1 { width: 40px; }
.q2 { width: 86px; }
.q3 { width: 14px; }
.qstar { color: #e8b33a; font-size: 12px; line-height: 12px; margin-top: -4px; }
.qarrow { font-size: 11px; line-height: 12px; margin: -3px 0 0 8px; color: #ccc; }
.qtext { font-size: 15px; line-height: 16px; margin-top: -9px; color: #ccc; white-space: nowrap; letter-spacing: 1px; }

.nx-tabs { height: 28px; width: 914px; overflow: hidden; flex: none; display: flex; align-items: stretch; color: #e8e8e8; font-size: 14px; letter-spacing: 1.5px; }
.nx-tabs span { flex: none; }
.nfile { width: 90px; margin-right: 6px; text-align: center; line-height: 25px; border-radius: 3px 3px 0 0; background: linear-gradient(#4d7fb2, #235f9f 45%, #164a86); color: #fff; }
.ntab-on { width: 62px; text-align: center; line-height: 25px; background: linear-gradient(#fff, #e6e6e6); color: #222; border-radius: 3px 3px 0 0; }
.ntab { margin-left: 33px; line-height: 25px; white-space: nowrap; }
.nt-first { margin-left: 17px; }

.nx-ribbon { height: 97px; flex: none; display: flex; background: linear-gradient(#e6e6e6, #d0d0d0); color: #222; font-size: 14px; letter-spacing: 1.5px; overflow: hidden; }
.npanel { display: flex; flex-direction: column; border-right: 1px solid #f0f0f0; box-shadow: inset -1px 0 0 #bbb; flex: none; }
.npanel-body { height: 76px; display: flex; padding-top: 4px; flex: none; }
.npanel-title { height: 21px; padding-bottom: 4px; display: flex; align-items: center; color: #444; }
.npanel-title span { flex: 1; text-align: center; }
.npanel-title .tri { margin-right: 10px; }
.np-1 { width: 98px; }
.np-2 { width: 315px; }
.np-3 { width: 130px; }
.np-4 { width: 172px; }
.np-5 { width: 126px; }
.np-6 { flex: 1; border-right: 0; box-shadow: none; }
.ntool { display: flex; flex-direction: column; align-items: center; white-space: nowrap; }
.ntool span { line-height: 18px; margin-top: 3px; }
.ntool .tri { margin-top: 6px; }
.nt-sheet { width: 78px; margin-left: 11px; }
.nt-sheet svg { margin-left: 2px; }
.nt-wiz { width: 95px; margin-left: 12px; }
.nt-base { width: 63px; margin-left: 9px; }
.ngrid svg { width: 20px; height: 20px; }
.ngrid-view { display: grid; grid-template-columns: 26px 20px; grid-auto-rows: 24px; margin: 5px 0 0 8px; width: 54px; }
.nt-upd { width: 62px; }
.nt-quick { width: 30px; margin-left: 13px; }
.ngrid-dim { display: grid; grid-template-columns: 24px 24px 20px; grid-auto-rows: 24px; margin: 5px 0 0 11px; }
.nt-A { width: 32px; margin-left: 12px; padding-top: 2px; }
.nt-A span { margin-top: 1px; }
.nbigA { display: block; height: 32px; font: 400 44px/32px "Liberation Serif", serif; color: #e08a2c; -webkit-text-stroke: 1px #e08a2c; }
.ngrid-note { display: grid; grid-template-columns: 25px 25px 25px 20px; grid-auto-rows: 24px; margin: 5px 0 0 10px; }
.note-tri { margin: 6px 0 0 6px; }
.sketch { width: 113px; height: 69px; margin: 1px 0 0 8px; display: flex; background: #dedede; border: 1px solid #bbb; }
.ngrid-sketch { width: 92px; display: grid; grid-template-columns: repeat(4, 23px); grid-auto-rows: 23px; align-items: center; justify-items: center; }
.sketch-scroll { flex: 1; display: flex; flex-direction: column; }
.ss { flex: 1; display: flex; flex-direction: column; gap: 2px; align-items: center; justify-content: center; background: #e8e8e8; border: 1px solid #bbb; }
.ss-up { background: #e2e2e2; border-color: #d8d8d8; }
.ss-bar { width: 8px; height: 1px; background: #222; }
.nt-table { margin-left: 12px; }
.nt-table svg { margin-left: 16px; align-self: flex-start; }

.ngrid svg, .nx-ribbon svg { fill: none; }
.o { stroke: #e08a3c; stroke-width: 1.3; }
.t { stroke: #2fa3b8; stroke-width: 1.3; }
.oo { stroke: #e08a3c; stroke-width: 1.2; fill: none; }
.kk { stroke: #333; stroke-width: 1; }
.oo-t { fill: none; }
.g2 { stroke: #999; stroke-width: 1.2; }
.g3 { stroke: #777; stroke-width: 1; fill: none; }
.g4 { stroke: #555; stroke-width: 1; fill: #eee; }
.g5 { stroke: #333; stroke-width: 1; fill: none; }

.nx-bar { height: 29px; padding-bottom: 2px; flex: none; display: flex; align-items: center; background: #e2e2e2; border-top: 1px solid #aaa; color: #222; font-size: 14px; letter-spacing: 1px; }
.tb-menu { width: 105px; height: 22px; padding-left: 13px; display: flex; align-items: center; border-right: 1px solid #ccc; margin-right: 12px; flex: none; }
.tb-ham { color: #555; margin-right: 6px; }
.tb-m { margin-right: 3px; }
.tb-input { width: 177px; height: 22px; background: #fff; padding-left: 2px; line-height: 20px; letter-spacing: 1.5px; flex: none; border-left: 1px solid #bbb; }
.tb-input-2 { width: 188px; margin-left: 10px; }
.tb-drop { width: 20px; height: 22px; flex: none; display: flex; align-items: center; justify-content: center; background: linear-gradient(#8db4dc, #5f95cb); border: 1px solid #3f6fa3; }
.tb-icons { display: flex; align-items: center; margin-left: 4px; }
.tb-i { width: 25px; display: flex; justify-content: center; flex: none; }
.tb-a { margin: 0 8px 0 1px; flex: none; }
.tb-a2 { margin: 0 10px 0 1px; }
.tb-box { width: 22px; height: 22px; margin-right: 1px; background: #f4f4f4; border: 1px solid #555; border-radius: 3px; display: flex; align-items: center; justify-content: center; flex: none; }
.tb-box-3 { margin-left: 3px; }
.tb-curve { width: 30px; }

.nx-main { flex: 1; min-height: 0; display: flex; }
.nx-side { width: 37px; flex: none; display: flex; flex-direction: column; align-items: center; gap: 5.5px; padding: 12px 2px 0 0; background: #dcdcdc; border-right: 2px solid #a8a8a8; }
.nx-side svg { width: 26px; height: 26px; fill: none; }
.side-r { font: 9px "Liberation Sans", sans-serif; fill: #d98c3c; }
.side-sep { width: 24px; height: 1px; background: #bbb; margin-top: -2px; }
.nx-doc { width: 877px; display: flex; flex-direction: column; background: #fff; }
.doc-tabs { height: 23px; flex: none; background: #efefef; border-bottom: 2px solid #666; }
.doc-tab { width: 160px; height: 21px; background: #555; display: flex; align-items: center; padding-left: 8px; gap: 5px; color: #fff; font-size: 14px; line-height: 19px; letter-spacing: 1px; margin-left: -2px; }
.doc-name { width: 102px; white-space: nowrap; }
.doc-x { font-size: 11px; margin-left: 1px; }
.cad-light { fill: none; }
.dash { stroke: #555; stroke-width: 1; stroke-dasharray: 7 5; }
.guide { stroke: #111; stroke-width: 1; }
.guide-f { stroke: #bbb; }
.solid { stroke: #111; stroke-width: 1.5; }
.thin { stroke: #6e6e6e; stroke-width: .8; }
.red { stroke: #b85a5a; stroke-width: 2.5; }
.dimline { stroke: #555; stroke-width: .9; }
.dimgray { stroke: #aaa; stroke-width: 2; }
.arrow { fill: #ddd; stroke: #666; stroke-width: .8; }
.chev { stroke: #111; stroke-width: 1.6; }
.ndim { font-family: "Liberation Sans", sans-serif; font-size: 16px; fill: #333; stroke: none; word-spacing: 4px; }
.w1 { fill: #d5effc; }
.w2 { fill: #95d8f8; }
.w3 { fill: #83cdf3; }
.w4 { fill: #80d4fa; }
.w5 { fill: #a8ddf9; }
.w6 { fill: #c2e6fa; }
.wl { fill: none; stroke: #fff; stroke-width: 1.2; }
.w0 { fill: #fff; }
.wt { fill: #c4e8fb; }
.wa { fill: #a9def9; }
.wb { fill: #82caef; }
```
